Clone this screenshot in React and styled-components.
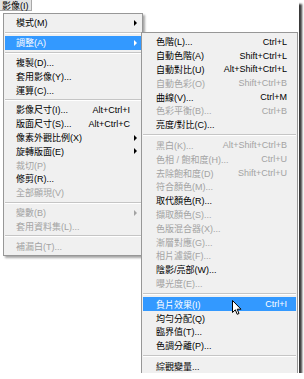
import React from 'react';
import styled, { createGlobalStyle } from 'styled-components';

const Global = createGlobalStyle`
  html, body { margin: 0; padding: 0; background: #fff; }
  body {
    font-family: "Liberation Sans", "Noto Sans CJK TC", sans-serif;
    font-size: 9px;
  }
`;

const Frame = styled.div`
  position: relative;
  width: 299px;
  height: 373px;
  background: #fff;
  overflow: hidden;
  box-shadow: 3px 4px 2px #3a3a3a;
`;

const BarItem = styled.div`
  display: inline-flex;
  align-items: center;
  height: 11px;
  padding: 0 2px;
  margin-bottom: 2px;
  border: 1px solid #a8a8a8;
  border-top: 0;
  border-left: 0;
  background: #e4e4e4;
  color: #000;
  box-sizing: border-box;
`;

const Menu = styled.div`
  box-sizing: border-box;
  width: ${p => p.$width}px;
  margin-left: 3px;
  padding: 2px 1px;
  background: #f0f0f0;
  border: 1px solid #979797;
  box-shadow: 2px 2px 2px rgba(0, 0, 0, 0.35);
`;

const SubMenu = styled(Menu)`
  position: absolute;
  left: 141px;
  top: 32px;
  margin-left: 0;
  box-shadow: none;
`;

const Item = styled.div`
  display: flex;
  align-items: center;
  height: 13.8px;
  padding-left: ${p => p.$pad}px;
  background: ${p => (p.$active ? '#3399ff' : 'transparent')};
  color: ${p => (p.$active ? '#fff' : p.$disabled ? '#a3a3a3' : '#000')};
  white-space: nowrap;
`;

const Label = styled.span`
  flex: 1;
`;

const Key = styled.span`
  text-align: right;
`;

const ArrowSlot = styled.span`
  position: relative;
  width: ${p => p.$w}px;
  height: 100%;
  flex-shrink: 0;
`;

const Tri = styled.span`
  position: absolute;
  left: 4px;
  top: 4px;
  width: 0;
  height: 0;
  border-top: 3px solid transparent;
  border-bottom: 3px solid transparent;
  border-left: 3px solid ${p => (p.$active ? '#fff' : p.$disabled ? '#a3a3a3' : '#000')};
`;

const Sep = styled.div`
  height: ${p => p.$h}px;
  display: flex;
  align-items: center;
  &::before {
    content: '';
    flex: 1;
    border-top: 1px solid #c5c5c5;
    border-bottom: 1px solid #fff;
  }
`;

const Cursor = styled.svg`
  position: absolute;
  left: 232px;
  top: 300px;
`;

const mainItems = [
  { label: '模式(M)', arrow: true },
  'sep',
  { label: '調整(A)', arrow: true, active: true },
  'sep',
  { label: '複製(D)...' },
  { label: '套用影像(Y)...' },
  { label: '運算(C)...' },
  'sep',
  { label: '影像尺寸(I)...', key: 'Alt+Ctrl+I' },
  { label: '版面尺寸(S)...', key: 'Alt+Ctrl+C' },
  { label: '像素外觀比例(X)', arrow: true },
  { label: '旋轉版面(E)', arrow: true },
  { label: '裁切(P)', disabled: true },
  { label: '修剪(R)...' },
  { label: '全部顯現(V)', disabled: true },
  'sep',
  { label: '變數(B)', arrow: true, disabled: true },
  { label: '套用資料集(L)...', disabled: true },
  'sep',
  { label: '補漏白(T)...', disabled: true },
];

const subItems = [
  { label: '色階(L)...', key: 'Ctrl+L' },
  { label: '自動色階(A)', key: 'Shift+Ctrl+L' },
  { label: '自動對比(U)', key: 'Alt+Shift+Ctrl+L' },
  { label: '自動色彩(O)', key: 'Shift+Ctrl+B', disabled: true },
  { label: '曲線(V)...', key: 'Ctrl+M' },
  { label: '色彩平衡(B)...', key: 'Ctrl+B', disabled: true },
  { label: '亮度/對比(C)...' },
  'sep',
  { label: '黑白(K)...', key: 'Alt+Shift+Ctrl+B', disabled: true },
  { label: '色相 / 飽和度(H)...', key: 'Ctrl+U', disabled: true },
  { label: '去除飽和度(D)', key: 'Shift+Ctrl+U', disabled: true },
  { label: '符合顏色(M)...', disabled: true },
  { label: '取代顏色(R)...' },
  { label: '擷取顏色(S)...', disabled: true },
  { label: '色版混合器(X)...', disabled: true },
  { label: '漸層對應(G)...', disabled: true },
  { label: '相片濾鏡(F)...', disabled: true },
  { label: '陰影/亮部(W)...' },
  { label: '曝光度(E)...', disabled: true },
  'sep',
  { label: '負片效果(I)', key: 'Ctrl+I', active: true },
  { label: '均勻分配(Q)' },
  { label: '臨界值(T)...' },
  { label: '色調分離(P)...' },
  'sep',
  { label: '綜觀變量...' },
];

function MenuList({ items, pad, slot, sep }) {
  return items.map((it, i) =>
    it === 'sep' ? (
      <Sep key={i} $h={sep} />
    ) : (
      <Item key={i} $pad={pad} $active={it.active} $disabled={it.disabled}>
        <Label>{it.label}</Label>
        {it.key && <Key>{it.key}</Key>}
        <ArrowSlot $w={slot}>
          {it.arrow && <Tri $active={it.active} $disabled={it.disabled} />}
        </ArrowSlot>
      </Item>
    )
  );
}

export default function App() {
  return (
    <>
      <Global />
      <Frame>
        <BarItem>影像(I)</BarItem>
        <Menu $width={140}>
          <MenuList items={mainItems} pad={11} slot={11} sep={6} />
        </Menu>
        <SubMenu $width={157}>
          <MenuList items={subItems} pad={13} slot={9} sep={7} />
        </SubMenu>
        <Cursor width="10" height="16" viewBox="0 0 10 16">
          <path
            d="M0.5 0.5 L0.5 12.5 L3.3 9.8 L5.2 14.3 L7 13.5 L5.2 9.2 L9 9.2 Z"
            fill="#fff"
            stroke="#000"
            strokeWidth="1"
            strokeLinejoin="round"
          />
        </Cursor>
      </Frame>
    </>
  );
}
